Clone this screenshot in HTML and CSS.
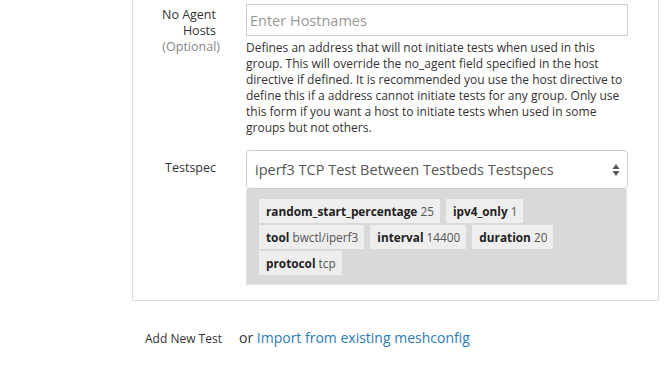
FILE: index.html
```html
<!DOCTYPE html>
<html lang="en">
<head>
  <meta charset="UTF-8">
  <meta name="viewport" content="width=device-width, initial-scale=1.0">
  <title>Testspec</title>
  <link rel="stylesheet" href="styles.css">
</head>
<body>
  <div class="test-card">
    <div class="form-row">
      <label class="form-label">
        No Agent Hosts<br>
        <span class="optional">(Optional)</span>
      </label>
      <div class="form-field">
        <input class="text-input" type="text" placeholder="Enter Hostnames">
        <p class="help-text">Defines an address that will not initiate tests when used in this group. This will override the no_agent field specified in the host directive if defined. It is recommended you use the host directive to define this if a address cannot initiate tests for any group. Only use this form if you want a host to initiate tests when used in some groups but not others.</p>
      </div>
    </div>

    <div class="form-row testspec-row">
      <label class="form-label">Testspec</label>
      <div class="form-field">
        <div class="select-box">
          <span class="select-value">iperf3 TCP Test Between Testbeds Testspecs</span>
          <svg class="select-arrows" width="8" height="14" viewBox="0 0 8 14">
            <path d="M4 1 L7.5 6 L0.5 6 Z" fill="#555"/>
            <path d="M4 13 L7.5 8 L0.5 8 Z" fill="#555"/>
          </svg>
        </div>
        <div class="spec-params">
          <span class="param"><b>random_start_percentage</b> 25</span>
          <span class="param"><b>ipv4_only</b> 1</span>
          <span class="param"><b>tool</b> bwctl/iperf3</span>
          <span class="param"><b>interval</b> 14400</span>
          <span class="param"><b>duration</b> 20</span>
          <span class="param"><b>protocol</b> tcp</span>
        </div>
      </div>
    </div>
  </div>

  <div class="add-test">
    <span class="add-label">Add New Test</span>
    <span class="import">or <a href="#">Import from existing meshconfig</a></span>
  </div>
</body>
</html>
```

FILE: styles.css
```css
* {
  margin: 0;
  padding: 0;
  box-sizing: border-box;
}

body {
  font-family: "Open Sans", "Noto Sans", Arial, sans-serif;
  font-size: 12px;
  line-height: 16px;
  color: #333333;
  background-color: #ffffff;
  padding-left: 132px;
}

.test-card {
  width: 527px;
  border: 1px solid #dddddd;
  border-top: none;
  padding: 4px 0 15px 0;
}

.form-row {
  display: grid;
  grid-template-columns: 83px 382px;
  column-gap: 30px;
}

.form-label {
  display: block;
  text-align: right;
  padding-left: 20px;
  padding-top: 3px;
  font-size: 12.5px;
}

.optional {
  color: #888888;
  margin-right: -4px;
}

.text-input {
  display: block;
  width: 100%;
  height: 32px;
  border: 1px solid #cccccc;
  padding: 0 3px;
  font-family: inherit;
  font-size: 14.5px;
  color: #333333;
  outline: none;
}

.text-input::placeholder {
  color: #999999;
}

.help-text {
  margin-top: 4px;
}

.testspec-row {
  margin-top: 14px;
}

.testspec-row .form-label {
  padding-top: 10px;
}

.select-box {
  display: flex;
  align-items: center;
  justify-content: space-between;
  height: 39px;
  border: 1px solid #cccccc;
  border-radius: 4px;
  padding: 0 7px 0 8px;
  font-size: 14.5px;
  color: #555555;
}

.spec-params {
  display: flex;
  flex-wrap: wrap;
  gap: 2px 6px;
  background-color: #d9d9d9;
  border: 1px solid #e3e3e3;
  border-top: none;
  padding: 10px 12px 9px 12px;
  margin-right: 1px;
}

.param {
  display: inline-block;
  height: 24px;
  line-height: 24px;
  padding: 0 6px 0 7px;
  font-size: 11.8px;
  background-color: #eeeeee;
  color: #555555;
}

.param b {
  color: #222222;
}

.add-test {
  display: flex;
  align-items: baseline;
  padding: 29px 0 0 13px;
}

.add-label {
  font-size: 12px;
  width: 94px;
}

.import {
  font-size: 14px;
}

.import a {
  color: #2a7bb8;
  text-decoration: none;
}
```
